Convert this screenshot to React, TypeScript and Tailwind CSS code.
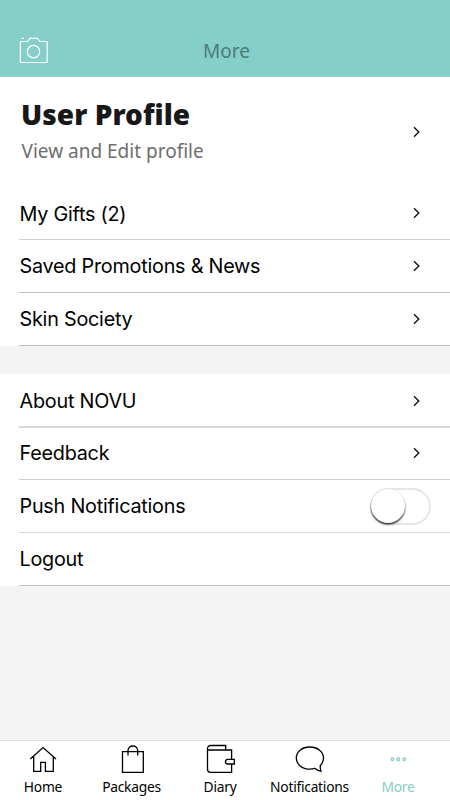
import { useState } from "react";
import type { ReactNode } from "react";

const menuItems = [
  { label: "My Gifts (2)", border: "border-[#d0d0d0]", offset: "pt-[2px]" },
  { label: "Saved Promotions & News", border: "border-[#bdbdbd]", offset: "pt-0" },
  { label: "Skin Society", border: "border-[#bdbdbd]", offset: "pt-0" },
];

const tabs: { label: string; width: string; icon: ReactNode }[] = [
  {
    label: "Home",
    width: "w-[86px]",
    icon: <path d="M2.300 16 15 4.500 28 16M5.700 13.500v14.900h7v-9h4.700v9h7.900V13.500" />,
  },
  {
    label: "Packages",
    width: "w-[91px]",
    icon: <path d="M5.500 8.700h20.800v20.600H5.500zM11 12.500V7.500a4.850 4.500 0 0 1 9.700 0v5" />,
  },
  {
    label: "Diary",
    width: "w-[86px]",
    icon: (
      <>
        <path d="M20.700 7V2.500H5.500a3 3 0 0 0-3 3v20.800a3 3 0 0 0 3 3h21.100V21M2.500 6q0 1 2 1h22.100v9" />
        <path d="M29.300 16.300h-6.500a2.350 2.350 0 0 0 0 4.700h6.500z" />
      </>
    ),
  },
  {
    label: "Notifications",
    width: "w-[93px]",
    icon: <path d="M14.800 4C7 4 1.300 8.700 1.300 15s5.700 11.200 13.500 11.200c1.800 0 3.500-.3 5.200-.8 1.800 1.400 3.700 2.400 6 2.800-.7-1.700-.9-3.500-.7-5.700 2-1.900 3.200-4.500 3.200-7.500 0-6.300-6-11-13.700-11z" />,
  },
  {
    label: "More",
    width: "w-[84px]",
    icon: (
      <>
        <circle cx="9.300" cy="16.300" r="1.300" />
        <circle cx="15.300" cy="16.300" r="1.300" />
        <circle cx="21.300" cy="16.300" r="1.300" />
      </>
    ),
  },
];

function Chevron() {
  return (
    <svg className="w-[8px] h-[12px] shrink-0" viewBox="0 0 8 12" fill="none" stroke="#111" strokeWidth="1.4">
      <path d="M1 1.200 5.800 6 1 10.800" />
    </svg>
  );
}

function Row({ label, border = "border-[#c4c4c4]", height = "h-[53px]", offset = "pt-0", children }: {
  label: string;
  border?: string;
  height?: string;
  offset?: string;
  children?: ReactNode;
}) {
  return (
    <div className="bg-white pl-[19px]">
      <div className={`flex items-center justify-between border-b pl-[0.5px] ${height} ${border}`}>
        <span className={`text-[19.8px] leading-6 tracking-[-0.23px] text-black whitespace-nowrap ${offset}`}>{label}</span>
        {children}
      </div>
    </div>
  );
}

export default function App() {
  const [activeTab, setActiveTab] = useState("More");
  const [pushEnabled, setPushEnabled] = useState(false);

  return (
    <div className="w-[450px] h-[800px] flex flex-col overflow-hidden bg-[#f4f4f4] font-['Inter',sans-serif]">
      {/* Header */}
      <header className="h-[77px] shrink-0 bg-[#86cec9] grid grid-cols-3 items-end px-[19px] pb-[12px] border-b border-[#96d2ce]">
        <button className="w-[30px] h-[28px]">
          <svg className="w-[30px] h-[28px]" viewBox="0 0 30 28" fill="none" stroke="#fff" strokeWidth="1.2">
            <path d="M1.400 5.500h7.300L10.900 2.300h7.500l2.300 3.200h7.500v21H1.400zM2.500 2.400h2.500" />
            <circle cx="14.500" cy="15.600" r="6.200" />
          </svg>
        </button>
        <h1 className="text-center text-[19px] leading-[26px] pl-[3px] text-[#4a7d79] font-['Noto_Sans',sans-serif]">More</h1>
      </header>

      {/* Profile */}
      <section className="h-[110px] shrink-0 bg-white flex items-center justify-between pl-[21px] pr-[29px] font-['Noto_Sans',sans-serif]">
        <div className="pb-[5px]">
          <h2 className="text-[28px] leading-[38px] font-black tracking-[0.05px] text-[#181818]">User Profile</h2>
          <p className="text-[19px] leading-[26px] mt-[5px] pl-[0.5px] text-[#6e6e6e]">View and Edit profile</p>
        </div>
        <Chevron />
      </section>

      {/* Menu */}
      <section>
        {menuItems.map((item) => (
          <Row key={item.label} label={item.label} border={item.border} offset={item.offset}>
            <span className="pr-[29px]"><Chevron /></span>
          </Row>
        ))}
      </section>

      <section className="mt-[28px]">
        <Row label="About NOVU" height="h-[54px]" border="border-b-2 border-[#d9d8de]" offset="pt-[2px]">
          <span className="pr-[29px] pt-px"><Chevron /></span>
        </Row>
        <Row label="Feedback" height="h-[52px]" border="border-[#cecece]" offset="pb-px">
          <span className="pr-[29px] pb-px"><Chevron /></span>
        </Row>
        <Row label="Push Notifications" border="border-[#d8d8d8]">
          <button
            role="switch"
            aria-checked={pushEnabled}
            onClick={() => setPushEnabled(!pushEnabled)}
            className={`w-[61px] h-[37px] mr-[19px] rounded-full border-2 flex items-center ${
              pushEnabled ? "justify-end bg-[#86cec9] border-[#86cec9]" : "bg-white border-[#e6e6e6]"
            }`}
          >
            <span className="w-[34px] h-[34px] -ml-px rounded-full bg-white shadow-[0_1.5px_2px_rgba(0,0,0,0.85)]" />
          </button>
        </Row>
        <Row label="Logout" />
      </section>

      {/* Tab bar */}
      <nav className="mt-auto h-[60px] shrink-0 bg-white border-t border-[#e2e2e2] flex font-['Noto_Sans',sans-serif]">
        {tabs.map((tab) => (
          <button
            key={tab.label}
            onClick={() => setActiveTab(tab.label)}
            className={`flex flex-col items-center pt-[2px] ${tab.width} ${
              activeTab === tab.label ? "text-[#86cec9]" : "text-black"
            }`}
          >
            <svg className="w-[30px] h-[31px]" viewBox="0 0 30 31" fill="none" stroke="currentColor" strokeWidth="1.3">
              {tab.icon}
            </svg>
            <span className="text-[13.800px] leading-[20px] mt-[3px] tracking-[-0.25px] whitespace-nowrap">{tab.label}</span>
          </button>
        ))}
      </nav>
    </div>
  );
}
